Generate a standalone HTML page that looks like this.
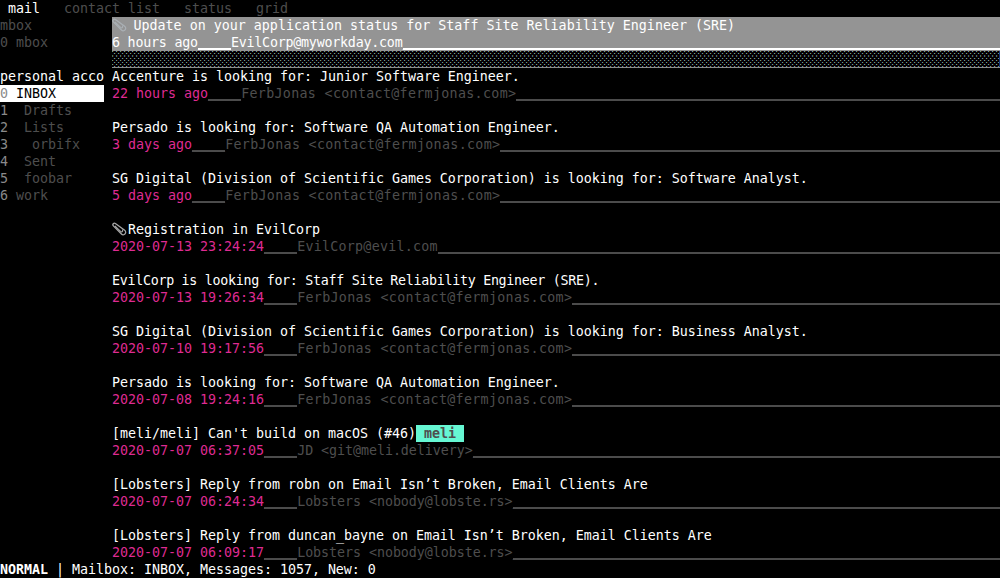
<!DOCTYPE html>
<html lang="en"><head><meta charset="utf-8"><title>meli</title>
<style>
html,body{margin:0;padding:0;background:#000;}
body{width:1000px;height:578px;overflow:hidden;position:relative;font-family:"DejaVu Sans Mono","Liberation Mono",monospace;font-size:13.3333px;letter-spacing:-0.0273px;line-height:17px;color:#fff;}
.r{position:absolute;height:17px;white-space:pre;}
.bar{position:absolute;height:17px;}
.w{color:#fff}.d{color:#4e4e4e}.g{color:#8a8a8a}.k{color:#000}
.p{color:#df2b92}.u{color:#4e4e4e}.f{color:#4e4e4e}
.b{font-weight:bold}
.tag{background:#66f7d3;color:#4e4e4e;font-weight:bold;display:inline-block;height:17px;vertical-align:top}
.clip{position:absolute;left:0;top:0}
.shade{position:absolute;display:block}
.ln{position:absolute;height:2px}
.u,.uw{position:relative;top:-1px}
.u{letter-spacing:0.273px}
.w1{color:#fff;letter-spacing:-0.003px}
.w16{color:#fff;letter-spacing:-0.292px}
.ws{color:#fff;letter-spacing:-0.215px}
.uws{color:#fff;position:relative;top:-1px;letter-spacing:0.22px}
</style></head>
<body>
<div class="r" style="top:0px;left:0px;"><span class="w"> mail   </span><span class="d">contact list   status   grid</span></div>
<div class="r" style="top:17px;left:0px;"><span class="d">mbox</span></div>
<div class="r" style="top:34px;left:0px;"><span class="d">0 mbox</span></div>
<div class="r" style="top:68px;left:0px;"><span class="w">personal acco</span></div>
<div class="bar" style="top:85px;left:0;width:104px;background:#fff"></div>
<div class="r" style="top:85px;left:0px;"><span class="g">0 </span><span class="k">INBOX</span></div>
<div class="r" style="top:102px;left:0px;"><span class="g">1  </span><span class="d">Drafts</span></div>
<div class="r" style="top:119px;left:0px;"><span class="g">2  </span><span class="d">Lists</span></div>
<div class="r" style="top:136px;left:0px;"><span class="g">3   </span><span class="d">orbifx</span></div>
<div class="r" style="top:153px;left:0px;"><span class="g">4  </span><span class="d">Sent</span></div>
<div class="r" style="top:170px;left:0px;"><span class="g">5  </span><span class="d">foobar</span></div>
<div class="r" style="top:187px;left:0px;"><span class="g">6 </span><span class="d">work</span></div>
<div class="bar" style="top:17px;left:112px;width:888px;height:34px;background:#949494"></div>
<div class="r" style="top:17px;left:112px;color:#b6bec6"><svg class="clip" viewBox="0 0 16 17" width="16" height="17"><g fill="none" stroke="currentColor" stroke-opacity="0.65"><path d="M3.37 2.50 L12.65 9.33 A2.45 2.45 0 1 1 9.46 13.02 L1.35 4.84 A1.55 1.55 0 0 1 3.37 2.50 Z" stroke-width="1.3"/><path d="M2.9 4.9 L8.6 10.4 C9.6 11.3 10.9 10.6 10.6 9.3 L10.3 8.6" stroke-width="1.1"/></g></svg></div>
<div class="r" style="top:17px;left:133.5px;"><span class="w1">Update on your application status for Staff Site Reliability Engineer (SRE)</span></div>
<div class="ln" style="top:48px;left:198.0px;width:33.0px;background:#fff"></div>
<div class="ln" style="top:48px;left:402.6px;width:597.4px;background:#fff"></div>
<div class="r" style="top:34px;left:112px;width:888px;overflow:hidden;"><span class="ws">6 hours ago</span><span class="uws">____</span><span class="ws" style="letter-spacing:-0.227px">EvilCorp@myworkday.com</span><span class="uws">_________________________________________________________________________</span></div>
<svg class="shade" style="top:51px;left:112px" width="888" height="17" viewBox="0 0 888 17"><defs><pattern id="sh" width="4" height="17" patternUnits="userSpaceOnUse"><rect x="3" y="0" width="1" height="1" fill="#00003c" opacity="1"/><rect x="0" y="0" width="1" height="1" fill="#5e9c84" opacity="1"/><rect x="1" y="0" width="1" height="1" fill="#461400" opacity="1"/><rect x="3" y="9" width="1" height="1" fill="#00003c" opacity="1"/><rect x="0" y="9" width="1" height="1" fill="#5e9c84" opacity="1"/><rect x="1" y="9" width="1" height="1" fill="#461400" opacity="1"/><rect x="3" y="13" width="1" height="1" fill="#00003c" opacity="1"/><rect x="0" y="13" width="1" height="1" fill="#5e9c84" opacity="1"/><rect x="1" y="13" width="1" height="1" fill="#461400" opacity="1"/><rect x="3" y="4" width="1" height="2" fill="#00003c" opacity="0.7"/><rect x="0" y="4" width="1" height="2" fill="#5e9c84" opacity="0.7"/><rect x="1" y="4" width="1" height="2" fill="#461400" opacity="0.7"/><rect x="1" y="2" width="1" height="1" fill="#00003c" opacity="1"/><rect x="2" y="2" width="1" height="1" fill="#5e9c84" opacity="1"/><rect x="3" y="2" width="1" height="1" fill="#461400" opacity="1"/><rect x="1" y="7" width="1" height="1" fill="#00003c" opacity="1"/><rect x="2" y="7" width="1" height="1" fill="#5e9c84" opacity="1"/><rect x="3" y="7" width="1" height="1" fill="#461400" opacity="1"/><rect x="1" y="11" width="1" height="1" fill="#00003c" opacity="1"/><rect x="2" y="11" width="1" height="1" fill="#5e9c84" opacity="1"/><rect x="3" y="11" width="1" height="1" fill="#461400" opacity="1"/><rect x="1" y="15" width="1" height="1" fill="#00003c" opacity="1"/><rect x="2" y="15" width="1" height="1" fill="#5e9c84" opacity="1"/><rect x="3" y="15" width="1" height="1" fill="#461400" opacity="1"/></pattern></defs><rect width="888" height="16" fill="url(#sh)"/><rect x="887" width="1" height="16" fill="#14307a"/><rect y="16" width="888" height="1" fill="#8c8c8c"/></svg>
<div class="r" style="top:68px;left:112px;"><span class="w">Accenture is looking for: Junior Software Engineer.</span></div>
<div class="ln" style="top:99px;left:208.0px;width:33.2px;background:#4b4b4b"></div>
<div class="ln" style="top:99px;left:516.4px;width:483.6px;background:#4b4b4b"></div>
<div class="r" style="top:85px;left:112px;width:888px;overflow:hidden;"><span class="p">22 hours ago</span><span class="u">____</span><span class="f" style="letter-spacing:0.313px">FerbJonas &lt;contact@fermjonas.com&gt;</span><span class="u">___________________________________________________________</span></div>
<div class="r" style="top:119px;left:112px;"><span class="w">Persado is looking for: Software QA Automation Engineer.</span></div>
<div class="ln" style="top:150px;left:192.0px;width:33.2px;background:#4b4b4b"></div>
<div class="ln" style="top:150px;left:500.4px;width:499.6px;background:#4b4b4b"></div>
<div class="r" style="top:136px;left:112px;width:888px;overflow:hidden;"><span class="p">3 days ago</span><span class="u">____</span><span class="f" style="letter-spacing:0.313px">FerbJonas &lt;contact@fermjonas.com&gt;</span><span class="u">_____________________________________________________________</span></div>
<div class="r" style="top:170px;left:112px;"><span class="w">SG Digital (Division of Scientific Games Corporation) is looking for: Software Analyst.</span></div>
<div class="ln" style="top:201px;left:192.0px;width:33.2px;background:#4b4b4b"></div>
<div class="ln" style="top:201px;left:500.4px;width:499.6px;background:#4b4b4b"></div>
<div class="r" style="top:187px;left:112px;width:888px;overflow:hidden;"><span class="p">5 days ago</span><span class="u">____</span><span class="f" style="letter-spacing:0.313px">FerbJonas &lt;contact@fermjonas.com&gt;</span><span class="u">_____________________________________________________________</span></div>
<div class="r" style="top:221px;left:112px;color:#fff"><svg class="clip" viewBox="0 0 16 17" width="16" height="17"><g fill="none" stroke="currentColor" stroke-opacity="0.65"><path d="M3.37 2.50 L12.65 9.33 A2.45 2.45 0 1 1 9.46 13.02 L1.35 4.84 A1.55 1.55 0 0 1 3.37 2.50 Z" stroke-width="1.3"/><path d="M2.9 4.9 L8.6 10.4 C9.6 11.3 10.9 10.6 10.6 9.3 L10.3 8.6" stroke-width="1.1"/></g></svg></div>
<div class="r" style="top:221px;left:128px;"><span class="w">Registration in EvilCorp</span></div>
<div class="ln" style="top:252px;left:264.0px;width:33.2px;background:#4b4b4b"></div>
<div class="ln" style="top:252px;left:438.0px;width:562.0px;background:#4b4b4b"></div>
<div class="r" style="top:238px;left:112px;width:888px;overflow:hidden;"><span class="p">2020-07-13 23:24:24</span><span class="u">____</span><span class="f" style="letter-spacing:0.253px">EvilCorp@evil.com</span><span class="u">____________________________________________________________________</span></div>
<div class="r" style="top:272px;left:112px;"><span class="w16">EvilCorp is looking for: Staff Site Reliability Engineer (SRE).</span></div>
<div class="ln" style="top:303px;left:264.0px;width:33.2px;background:#4b4b4b"></div>
<div class="ln" style="top:303px;left:572.4px;width:427.6px;background:#4b4b4b"></div>
<div class="r" style="top:289px;left:112px;width:888px;overflow:hidden;"><span class="p">2020-07-13 19:26:34</span><span class="u">____</span><span class="f" style="letter-spacing:0.313px">FerbJonas &lt;contact@fermjonas.com&gt;</span><span class="u">____________________________________________________</span></div>
<div class="r" style="top:323px;left:112px;"><span class="w">SG Digital (Division of Scientific Games Corporation) is looking for: Business Analyst.</span></div>
<div class="ln" style="top:354px;left:264.0px;width:33.2px;background:#4b4b4b"></div>
<div class="ln" style="top:354px;left:572.4px;width:427.6px;background:#4b4b4b"></div>
<div class="r" style="top:340px;left:112px;width:888px;overflow:hidden;"><span class="p">2020-07-10 19:17:56</span><span class="u">____</span><span class="f" style="letter-spacing:0.313px">FerbJonas &lt;contact@fermjonas.com&gt;</span><span class="u">____________________________________________________</span></div>
<div class="r" style="top:374px;left:112px;"><span class="w">Persado is looking for: Software QA Automation Engineer.</span></div>
<div class="ln" style="top:405px;left:264.0px;width:33.2px;background:#4b4b4b"></div>
<div class="ln" style="top:405px;left:572.4px;width:427.6px;background:#4b4b4b"></div>
<div class="r" style="top:391px;left:112px;width:888px;overflow:hidden;"><span class="p">2020-07-08 19:24:16</span><span class="u">____</span><span class="f" style="letter-spacing:0.313px">FerbJonas &lt;contact@fermjonas.com&gt;</span><span class="u">____________________________________________________</span></div>
<div class="r" style="top:425px;left:112px;"><span class="w">[meli/meli] Can't build on macOS (#46)</span><span class="tag"> meli </span></div>
<div class="ln" style="top:456px;left:264.0px;width:33.2px;background:#4b4b4b"></div>
<div class="ln" style="top:456px;left:472.8px;width:527.2px;background:#4b4b4b"></div>
<div class="r" style="top:442px;left:112px;width:888px;overflow:hidden;"><span class="p">2020-07-07 06:37:05</span><span class="u">____</span><span class="f" style="letter-spacing:-0.047px">JD &lt;git@meli.delivery&gt;</span><span class="u">________________________________________________________________</span></div>
<div class="r" style="top:476px;left:112px;"><span class="w">[Lobsters] Reply from robn on Email Isn’t Broken, Email Clients Are</span></div>
<div class="ln" style="top:507px;left:264.0px;width:33.2px;background:#4b4b4b"></div>
<div class="ln" style="top:507px;left:512.7px;width:487.3px;background:#4b4b4b"></div>
<div class="r" style="top:493px;left:112px;width:888px;overflow:hidden;"><span class="p">2020-07-07 06:24:34</span><span class="u">____</span><span class="f" style="letter-spacing:-0.047px">Lobsters &lt;nobody@lobste.rs&gt;</span><span class="u">___________________________________________________________</span></div>
<div class="r" style="top:527px;left:112px;"><span class="w">[Lobsters] Reply from duncan_bayne on Email Isn’t Broken, Email Clients Are</span></div>
<div class="ln" style="top:558px;left:264.0px;width:33.2px;background:#4b4b4b"></div>
<div class="ln" style="top:558px;left:512.7px;width:487.3px;background:#4b4b4b"></div>
<div class="r" style="top:544px;left:112px;width:888px;overflow:hidden;"><span class="p">2020-07-07 06:09:17</span><span class="u">____</span><span class="f" style="letter-spacing:-0.047px">Lobsters &lt;nobody@lobste.rs&gt;</span><span class="u">___________________________________________________________</span></div>
<div class="r" style="top:561px;left:0px;"><span class="w b">NORMAL</span><span class="w"> | Mailbox: INBOX, Messages: 1057, New: 0</span></div>
</body></html>
